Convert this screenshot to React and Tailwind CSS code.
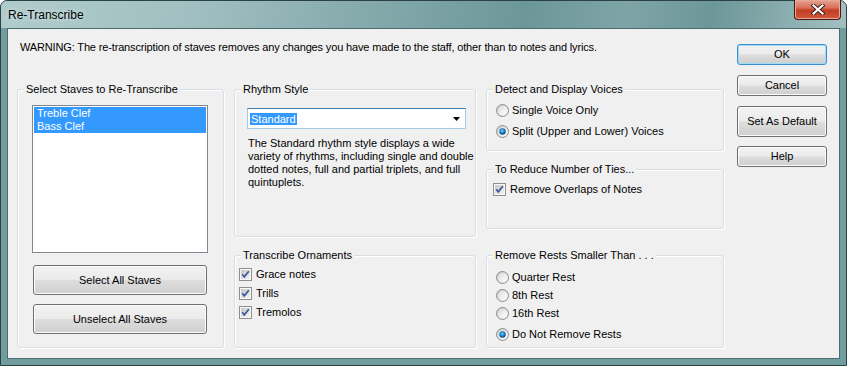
import React from 'react';

// Re-Transcribe dialog (Windows 7 basic theme look)

function Button({ children, className, isDefault }) {
  return (
    <div
      className={`${className} flex items-center justify-center rounded-[3px] border text-[11px] leading-[13px] text-black bg-[linear-gradient(#f2f2f2_0%,#ebebeb_48%,#dddddd_52%,#cfcfcf_100%)] ${
        isDefault
          ? 'border-[#3c8fcf] shadow-[inset_0_0_0_1px_#9cdcf7]'
          : 'border-[#707070] shadow-[inset_0_0_0_1px_#fbfbfb]'
      }`}
    >
      {children}
    </div>
  );
}

function Group({ title, className, children }) {
  return (
    <div className={`${className} rounded-[3px] border border-[#d5dfe5] shadow-[inset_1px_1px_0_#fff,1px_1px_0_#fff]`}>
      <div className="-mt-[7px] ml-[6px] w-fit bg-[#f0f0f0] px-[2px] leading-[13px]">{title}</div>
      {children}
    </div>
  );
}

function CheckBox() {
  return (
    <svg width="13" height="13" viewBox="0 0 13 13" className="shrink-0">
      <defs>
        <linearGradient id="cbFill" x1="0" y1="0" x2="1" y2="1">
          <stop offset="0" stopColor="#c6c6c6" />
          <stop offset="1" stopColor="#f4f4f4" />
        </linearGradient>
      </defs>
      <rect x="0.5" y="0.5" width="12" height="12" fill="#f8f8f8" stroke="#8e8f8f" />
      <rect x="2" y="2" width="9" height="9" fill="url(#cbFill)" />
      <path d="M3.2 6.3 L5.3 8.8 L9.8 3.2" stroke="#3d57a0" strokeWidth="1.7" fill="none" />
    </svg>
  );
}

function Radio({ checked }) {
  return (
    <svg width="13" height="13" viewBox="0 0 13 13" className="shrink-0">
      <defs>
        <linearGradient id="rbOuter" x1="0" y1="0" x2="1" y2="1">
          <stop offset="0" stopColor="#c4c4c4" />
          <stop offset="1" stopColor="#fdfdfd" />
        </linearGradient>
        <linearGradient id="rbInner" x1="0" y1="0" x2="1" y2="1">
          <stop offset="0" stopColor="#dcdcdc" />
          <stop offset="1" stopColor="#ffffff" />
        </linearGradient>
        <radialGradient id="rbDot" cx="0.45" cy="0.4" r="0.6">
          <stop offset="0" stopColor="#8ae8ff" />
          <stop offset="0.45" stopColor="#1d8fd6" />
          <stop offset="1" stopColor="#0b3f72" />
        </radialGradient>
      </defs>
      <circle cx="6.5" cy="6.5" r="6" fill="url(#rbOuter)" stroke="#8e8f8f" />
      <circle cx="6.5" cy="6.5" r="4.3" fill="url(#rbInner)" />
      {checked && <circle cx="6.5" cy="6.5" r="3.2" fill="url(#rbDot)" />}
    </svg>
  );
}

export default function App() {
  return (
    <div className="w-[847px] h-[366px] font-['Liberation_Sans',Arial,sans-serif] text-[11px] text-black">
      <div className="flex h-full w-full flex-col rounded-t-[7px] border border-[#2b4243] bg-[#719d9f]">
        {/* title bar */}
        <div className="flex h-[27px] items-start justify-between rounded-t-[6px] bg-[linear-gradient(100deg,#b0cbcc_0%,#a2c0c1_22%,#86abad_42%,#6c9799_62%,#7ea4a6_74%,#6c9799_84%,#a3c0c1_100%)]">
          <div className="pl-[7px] pt-[7px] text-[12px] leading-[15px] [text-shadow:0_0_5px_#e8f2f2]">Re-Transcribe</div>
          <div className="-mt-[1px] mr-[5px] flex h-[20px] w-[47px] items-center justify-center rounded-b-[4px] border border-t-0 border-[#4a1a12] bg-[linear-gradient(#e7a493_0%,#d9705a_40%,#c43e22_55%,#d0593c_100%)] shadow-[inset_0_0_0_1px_#e9a999]">
            <svg width="14" height="11" viewBox="0 0 14 11">
              <path d="M2.5 1.5 L11.5 9.5 M11.5 1.5 L2.5 9.5" stroke="#3a1a14" strokeWidth="4" strokeLinecap="square" />
              <path d="M2.5 1.5 L11.5 9.5 M11.5 1.5 L2.5 9.5" stroke="#ffffff" strokeWidth="2.2" strokeLinecap="square" />
            </svg>
          </div>
        </div>

        {/* client area */}
        <div className="mx-[6px] flex h-[331px] border border-[#4b6d6f] bg-[#f0f0f0]">
          <div className="flex flex-col pl-[9px]">
            <div className="ml-[3px] mt-[12px] whitespace-nowrap leading-[13px] tracking-[-0.15px]">
              WARNING: The re-transcription of staves removes any changes you have made to the staff, other than to notes and lyrics.
            </div>

            <div className="mt-[35px] flex">
              <Group className="h-[259px] w-[207px]" title="Select Staves to Re-Transcribe">
                <div className="ml-[14px] mt-[9px] h-[148px] w-[176px] border border-[#828790] bg-white p-[1px]">
                  <div className="bg-[#3399ff] pl-[3px] leading-[13px] text-white">Treble Clef</div>
                  <div className="bg-[#3399ff] pl-[3px] leading-[13px] text-white">Bass Clef</div>
                </div>
                <Button className="ml-[15px] mt-[12px] h-[30px] w-[174px]">Select All Staves</Button>
                <Button className="ml-[15px] mt-[9px] h-[30px] w-[174px]">Unselect All Staves</Button>
              </Group>

              <div className="ml-[10px] flex w-[242px] flex-col">
                <Group className="h-[148px]" title="Rhythm Style">
                  <div className="ml-[12px] mt-[12px] flex h-[21px] w-[219px] items-center border border-[#a4c9e3] border-t-[#3d7bad] bg-white pl-[2px] pr-[5px]">
                    <span className="bg-[#3399ff] px-[1px] leading-[12px] text-white">Standard</span>
                    <svg width="7" height="4" viewBox="0 0 7 4" className="ml-auto">
                      <path d="M0 0 H7 L3.5 4 Z" fill="#000" />
                    </svg>
                  </div>
                  <div className="ml-[13px] mt-[8px] whitespace-nowrap leading-[13px]">
                    The Standard rhythm style displays a wide
                    <br />
                    variety of rhythms, including single and double
                    <br />
                    dotted notes, full and partial triplets, and full
                    <br />
                    quintuplets.
                  </div>
                </Group>

                <Group className="mt-[18px] h-[93px]" title="Transcribe Ornaments">
                  <div className="mt-[3px]">
                    {['Grace notes', 'Trills', 'Tremolos'].map(label => (
                      <div key={label} className="flex h-[19px] items-center gap-[4px] pl-[4px]">
                        <CheckBox />
                        <span className="leading-[13px]">{label}</span>
                      </div>
                    ))}
                  </div>
                </Group>
              </div>

              <div className="ml-[10px] flex w-[238px] flex-col">
                <Group className="h-[62px]" title="Detect and Display Voices">
                  <div className="mt-[4px]">
                    <div className="flex h-[21px] items-center gap-[3px] pl-[9px]">
                      <Radio />
                      <span className="leading-[13px]">Single Voice Only</span>
                    </div>
                    <div className="flex h-[21px] items-center gap-[3px] pl-[9px]">
                      <Radio checked />
                      <span className="leading-[13px]">Split (Upper and Lower) Voices</span>
                    </div>
                  </div>
                </Group>

                <Group className="mt-[18px] h-[60px]" title="To Reduce Number of Ties...">
                  <div className="mt-[4px] flex h-[19px] items-center gap-[4px] pl-[6px]">
                    <CheckBox />
                    <span className="leading-[13px]">Remove Overlaps of Notes</span>
                  </div>
                </Group>

                <Group className="mt-[26px] h-[93px]" title="Remove Rests Smaller Than . . .">
                  <div className="mt-[6px]">
                    <div className="flex h-[18px] items-center gap-[3px] pl-[9px]">
                      <Radio />
                      <span className="leading-[13px]">Quarter Rest</span>
                    </div>
                    <div className="flex h-[18px] items-center gap-[3px] pl-[9px]">
                      <Radio />
                      <span className="leading-[13px]">8th Rest</span>
                    </div>
                    <div className="flex h-[18px] items-center gap-[3px] pl-[9px]">
                      <Radio />
                      <span className="leading-[13px]">16th Rest</span>
                    </div>
                    <div className="mt-[3px] flex h-[18px] items-center gap-[3px] pl-[9px]">
                      <Radio checked />
                      <span className="leading-[13px]">Do Not Remove Rests</span>
                    </div>
                  </div>
                </Group>
              </div>
            </div>
          </div>

          {/* dialog buttons */}
          <div className="ml-[13px] mt-[15px] flex flex-col">
            <Button isDefault className="h-[21px] w-[90px]">OK</Button>
            <Button className="mt-[10px] h-[21px] w-[90px]">Cancel</Button>
            <Button className="mt-[10px] h-[31px] w-[90px]">Set As Default</Button>
            <Button className="mt-[9px] h-[21px] w-[90px]">Help</Button>
          </div>
        </div>
      </div>
    </div>
  );
}
